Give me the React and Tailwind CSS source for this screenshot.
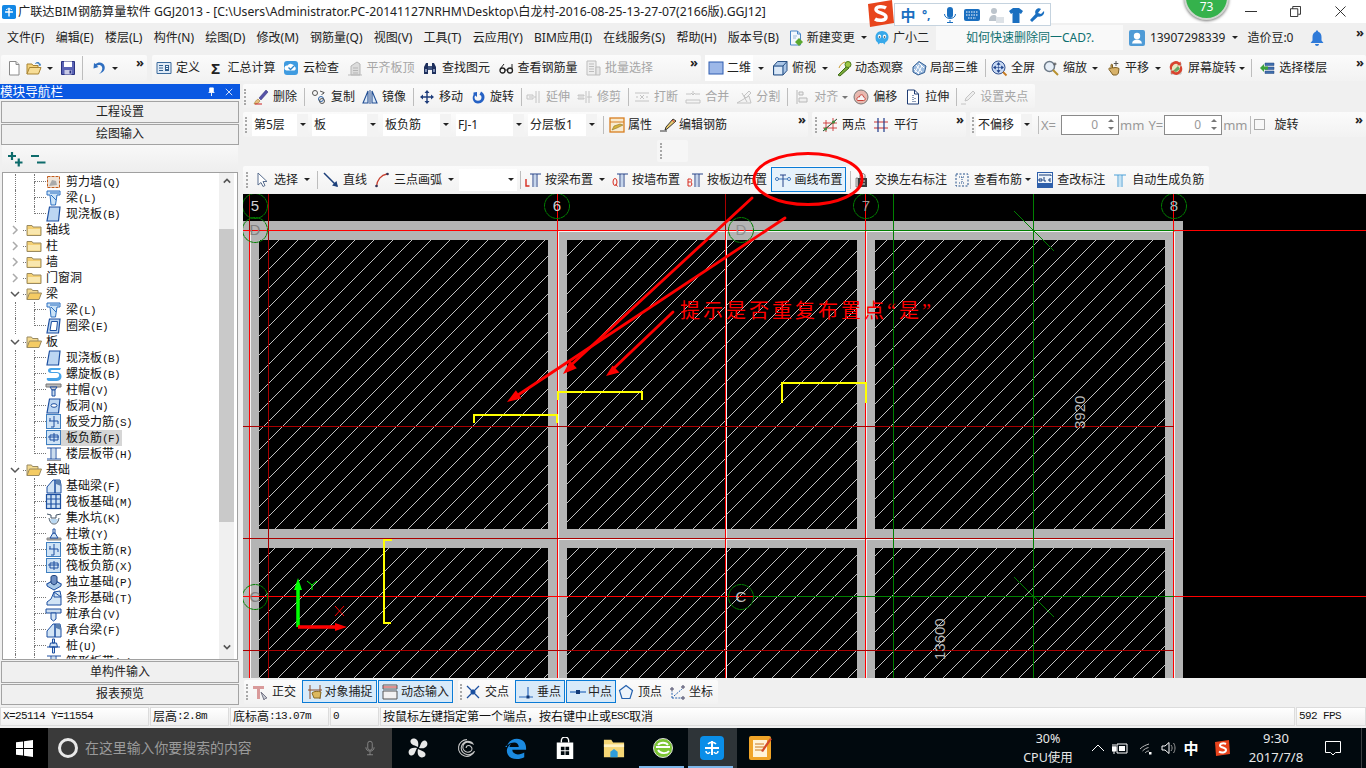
import React from "react";

const I = {
  new: <><path d="M3.5 1.5h6.5l3 3v10.5h-9.5z" fill="#fff" stroke="#8a8a8a"/><path d="M10 1.5v3h3" fill="#e4e4e4" stroke="#8a8a8a"/></>,
  open: <><path d="M1 14V4h5l1 1.500h5V8" fill="#f3d27c" stroke="#a98432"/><path d="M1 14l2.500-6.500H15L12.500 14z" fill="#f7dd96" stroke="#a98432"/><path d="M9 3.500c2-2 4-2 5 .5l1-.5-.5 2.500-2.300-.8.900-.5c-.8-1.300-2.300-1.500-3.600-.7" fill="#3f7fbf"/></>,
  save: <><path d="M1.500 1.500h13v13h-13z" fill="#5a63b5" stroke="#2b3280"/><path d="M4 1.500h8v5.500H4z" fill="#fff"/><path d="M4.500 10h7v4.500h-7z" fill="#c9cbe6"/><path d="M9.500 10.500h1.500v3H9.500z" fill="#2b3280"/></>,
  undo: <path d="M4 3l-.5 5.500L8.500 7 6.800 5.800C8.500 4.500 11 5 12 7c.8 2 0 4.500-3 7 4.500-1.500 6.500-4.500 5.500-8C13.500 2.500 9 1 5.500 4z" fill="#2f6fc0"/>,
  define: <><path d="M1 2.500h14v11H1z" fill="#dfeaf6" stroke="#3c6b9c"/><path d="M3 5h4v1H3zm0 2.500h4v1H3zm0 2.500h4v1H3zM9 5h4v6H9z" fill="#315f8f"/><path d="M10 6h2v1h-2zm0 2h2v1h-2z" fill="#fff"/></>,
  cloud: <><rect x="1" y="1" width="14" height="14" rx="3" fill="#3f9be0"/><path d="M3.500 10.500a2.500 2.500 0 0 1 1-5 4 4 0 0 1 7 1 2.200 2.200 0 0 1 0 4z" fill="#fff"/><path d="M5.500 7.500l2 2 3.500-3.500" fill="none" stroke="#2f86cc" strokeWidth="1.300"/></>,
  flat: <><path d="M4 15V6l6-4 3 2v11z" fill="#dcdcdc" stroke="#b5b5b5"/><path d="M6 8h5M6 10.500h5M6 13h5" stroke="#b5b5b5"/><path d="M1 15h14" stroke="#bbb"/></>,
  binoc: <><path d="M2 14V7l2-4h2v11zM14 14V7l-2-4h-2v11z" fill="#1e2f5c"/><path d="M6 6h4v4H6z" fill="#41547f"/><path d="M3 9h2v3H3zm8 0h2v3h-2z" fill="#7f8fb5"/></>,
  glass: <><circle cx="4.500" cy="10.500" r="2.500" fill="none" stroke="#222" strokeWidth="1.300"/><circle cx="12" cy="10.500" r="2.500" fill="none" stroke="#222" strokeWidth="1.300"/><path d="M7 10h2.500M2.500 8.500L6 4M14 8.500V4" stroke="#222" fill="none"/></>,
  batch: <><path d="M2 1h9v14H2z" fill="#eee" stroke="#bdbdbd"/><path d="M4 4h5M4 6.500h5M4 9h5M4 11.500h5M11 7h4v8h-4z" stroke="#bdbdbd" fill="#e6e6e6"/></>,
  sq: <rect x="1" y="2" width="14" height="12" fill="#9db8e8" stroke="#2f5db0"/>,
  box3d: <><path d="M1.500 6l4-4.500H15v9l-4 4.500H1.500z" fill="#a9c5e6" stroke="#274f82"/><path d="M1.500 6H11v9M11 6l4-4.500" fill="none" stroke="#274f82"/><path d="M2.500 7h7.500v7H2.500z" fill="#dbe8f6"/></>,
  orbit: <><path d="M2 15l9-9 2 2-9 8z" fill="#7aa83a" stroke="#3e6c16"/><circle cx="12" cy="4.500" r="3" fill="#9fc845" stroke="#4a7a1a"/><path d="M9 2c-3 1-5 3-6 6" stroke="#c79a2f" fill="none"/></>,
  cube: <><path d="M2 7l6-5.500L15 6l-1.500 6.500L7 15 2 12z" fill="#9fbde0" stroke="#2f5c92"/><path d="M5 5l6 7M8 3l5 5M3 9l5 5M8 5L4 12M11 6l-4 7" stroke="#fff" fill="none"/></>,
  full: <><circle cx="7.500" cy="7.500" r="6.500" fill="#c7d8f2" stroke="#2f4f8f"/><path d="M7.500 3v9M3 7.500h9M7.500 2.500l-1.500 2h3zM7.500 12.500l-1.500-2h3zM2.500 7.500l2-1.500v3zM12.500 7.500l-2-1.500v3z" stroke="#1c3f88" fill="#1c3f88" strokeWidth=".6"/><path d="M12 12l3.500 3.500" stroke="#c77a20" strokeWidth="1.800"/></>,
  zoom: <><circle cx="6.500" cy="6.500" r="5" fill="#e6eef7" stroke="#6d7a88" strokeWidth="1.500"/><path d="M10 10l5 5" stroke="#b8912f" strokeWidth="2"/><path d="M12 2.500v3M10.500 4h3" stroke="#555"/></>,
  pan: <><path d="M3 9.500c-.8-1.500 1-2 2-.7l0-3.800c0-1 1.500-1 1.500 0V8l2.500-.5c1.500 0 3 .3 4 1l-.7 5-2 1.500H7z" fill="#d8b26a" stroke="#7e6024"/><path d="M10 1v5M7.800 3.500h4.500" stroke="#555"/></>,
  screen: <><path d="M3 3h10v11H3z" fill="#e8e8c2" stroke="#bbb"/><path d="M5 11l5-5 2 3-4 3z" fill="#67a867"/><path d="M2.500 10a6 6 0 0 1 9-7.500l1-1 .5 4-4-.3 1-1A4.500 4.500 0 0 0 4 9.500zM13.500 6a6 6 0 0 1-9 7.500l-1 1-.5-4 4 .3-1 1A4.500 4.500 0 0 0 12 6.500z" fill="#d8432f"/></>,
  floors: <><path d="M6 3h9v2.500H6zM6 7h9v2.500H6zM6 11h9v2.500H6z" fill="#3f6fae" stroke="#24477c" strokeWidth=".5"/><path d="M1 8l4-4v2.500h4v3H5V12z" fill="#3ba33b"/></>,
  change: <><path d="M2.500 1h7l3 3v11h-10z" fill="#f3f8fd" stroke="#4a87c8"/><path d="M9.500 1v3h3" fill="none" stroke="#4a87c8"/><path d="M5 6h4M5 8h3" stroke="#9fbcd9"/><path d="M11 8l4 4-4 4-4-4z" fill="#5ba82f"/></>,
  xiao: <><path d="M8 1c4 0 6.500 2.800 6.500 6 0 2.800-1.500 4.500-3 5.300l-1 2.200-1.500-1.500c-1 .2-2 .2-3 0L4.500 14.500l-1-2.200C2 11.500 1.500 9.800 1.500 7 1.500 3.800 4 1 8 1z" fill="#38a9ea"/><ellipse cx="5.500" cy="6.500" rx="1.600" ry="2" fill="#fff"/><ellipse cx="10.500" cy="6.500" rx="1.600" ry="2" fill="#fff"/><circle cx="5.500" cy="7" r=".8" fill="#123"/><circle cx="10.500" cy="7" r=".8" fill="#123"/></>,
  user: <><rect x="0" y="0" width="16" height="16" rx="2" fill="#4f9bd6"/><circle cx="8" cy="6" r="3.200" fill="#fff"/><path d="M3 13.500c.5-3 2.500-4 5-4s4.500 1 5 4z" fill="#fff"/></>,
  bell: <path d="M8 .5c.8 0 1.200.5 1.200 1.300C11.500 2.500 12.500 4.500 12.500 7v3.500l2 2.500h-13l2-2.500V7c0-2.500 1-4.500 3.300-5.200C6.800 1 7.200.5 8 .5zM6 14h4c0 1.200-.9 2-2 2s-2-.8-2-2z" fill="#2f7ad8"/>,
  del: <><path d="M1 15c3 0 5-1 6-3L5 10c-2 1-3 3-4 5z" fill="#e4c080" stroke="#a47c30" strokeWidth=".6"/><path d="M6 9l7-8 2 2-7 8z" fill="#5552a8" stroke="#2c2a70" strokeWidth=".5"/><path d="M2 15h7" stroke="#c22" /></>,
  copy: <><circle cx="4" cy="4" r="2.500" fill="none" stroke="#555" strokeWidth="1"/><circle cx="10" cy="10" r="2.500" fill="none" stroke="#2f64a8"/><circle cx="11" cy="12" r="2.500" fill="none" stroke="#555"/><path d="M9 2l4 1.500-1 1.500M13 3.500l-2.500 2.500" stroke="#555" fill="none"/></>,
  mirror: <><path d="M1 14L6 2v12zM15 14L10 2v12z" fill="#dce9f7" stroke="#234f94" strokeWidth="1.100"/><path d="M8 1v14" stroke="#234f94"/></>,
  move: <path d="M8 1l2.500 3H8.700v3.300H12V5.500l3 2.500-3 2.500V8.700H8.700V12h1.800L8 15l-2.500-3h1.800V8.700H4v1.800L1 8l3-2.500v1.800h3.300V4H5.500z" fill="#1e3c7a"/>,
  rot: <path d="M3.500 3.500l0 2.500C1.500 9.500 3.500 14.500 8 14.500c4 0 6.500-3 6.500-6.500 0-2.500-1.500-4.500-3.500-5.500L9.500 5.800c1.500.5 2 1.500 2 2.700 0 2-1.500 3.300-3.500 3.300S4.500 10.500 4.500 8.500c0-.8.300-1.500.8-2L7 8V3z" fill="#2561c4"/>,
  ext: <path d="M1 6h6v4H1zM3 8h3M10 2v12M13 2v12M8 8h2" stroke="#c4c4c4" fill="#f4f4f4"/>,
  trim: <path d="M1 6h6v1H1zM1 9h6v1H1zM9 2v12M12 2v12M10 8h5" stroke="#c4c4c4" fill="none"/>,
  brk: <path d="M1 4h14M1 12h14M3 7v2M13 7v2M6 6l2 2-2 2M10 6L8 8l2 2" stroke="#c4c4c4" fill="none"/>,
  merge: <path d="M1 5h5M10 5h5M1 11h14v3H1zM8 2v4M6 4l2 2 2-2" stroke="#c4c4c4" fill="none"/>,
  split: <path d="M1 14h14L13 7 1 14zM6 4l5 9M13 2l2 2-5 5-2-2z" stroke="#c4c4c4" fill="#f3f3f3"/>,
  align: <path d="M3 1v14M5 3h4v3H5zM5 9h8v4H5z" stroke="#b8b8b8" fill="#eee"/>,
  offset: <><circle cx="8" cy="8" r="7" fill="#e8b9b0" stroke="#777"/><path d="M4.500 11.500c-1.500-1.500 0-4 2-3.500 0-3 4-3 4 0 2 0 2.500 3.500 0 3.500z" fill="#f6f6f6" stroke="#c9423a"/></>,
  stretch: <><path d="M2.500 1h7l4 4v10h-11z" fill="#fff" stroke="#1f3c74"/><path d="M9.500 1v4h4" fill="none" stroke="#1f3c74"/><path d="M8 6v8M10 9v1M10 12v1" stroke="#1f3c74" strokeDasharray="1 1"/></>,
  grip: <path d="M1 15h5M13 2l2 2-7 7-3 1 1-3z" stroke="#c4c4c4" fill="#eee"/>,
  prop: <><rect x="1" y="1" width="14" height="14" fill="#f8ebd0" stroke="#d87e20" strokeWidth="1.300"/><path d="M1 5h14" stroke="#d87e20"/><path d="M3 13l2-4 6-2 3 1-6 3z" fill="#d6b23c" stroke="#7c6418" strokeWidth=".5"/></>,
  pen: <><path d="M0 14h7M7 12l-2 1 1-3L13 2l3 2z" stroke="#222" fill="#e8c96c" strokeWidth=".9"/><path d="M12 3l2.500 2" stroke="#c33"/></>,
  two: <><path d="M1 14L15 2M4 3v12M11 1v13M1 6h14M1 11h14" stroke="#c33" strokeWidth=".9" fill="none" /><path d="M1 14L15 2" stroke="#264" /><circle cx="3.500" cy="12" r="1.600" fill="#3f8f3f"/><circle cx="11.500" cy="5" r="1.600" fill="#3f8f3f"/></>,
  cursor: <path d="M4 1v12l3-2.500 2 4 2-1-2-4h4z" fill="#fff" stroke="#5a6f8f"/>,
  line: <><path d="M1 1l13 13" stroke="#1c3f7a" strokeWidth="1.500"/><path d="M15 15l-6-1.500 4.500-4.500z" fill="#1c3f7a"/></>,
  arc: <><path d="M2.500 14.500C3 8 7 3 13 2" fill="none" stroke="#c8402f" strokeWidth="1.300"/><circle cx="2.500" cy="14" r="1.300" fill="#335"/><circle cx="13.500" cy="2" r="1.300" fill="#335"/></>,
  beamT: <><path d="M5 2h11M8 2v13M12 2v13" stroke="#26458a" fill="none"/><path d="M9 3h2v12H9z" fill="#c5d5ec"/><path d="M1 7v7h3.500" stroke="#d62d20" strokeWidth="1.400" fill="none"/></>,
  wallT: <><path d="M5 2h11M8 2v13M12 2v13" stroke="#26458a" fill="none"/><path d="M9 3h2v12H9z" fill="#c5d5ec"/><ellipse cx="3" cy="10" rx="2" ry="3.500" stroke="#d62d20" fill="none"/><path d="M3.500 12l2 2.500" stroke="#d62d20"/></>,
  edgeT: <><path d="M5 2h11M8 2v13M12 2v13" stroke="#26458a" fill="none"/><path d="M9 3h2v12H9z" fill="#c5d5ec"/><path d="M1 7h2.500c1.500 0 1.500 3 0 3 1.800 0 1.800 4 0 4H1zM1 10h2" stroke="#d62d20" fill="none"/></>,
  draw: <><path d="M1 7h14" stroke="#3a74b8"/><path d="M5 3h6M8 3v12" stroke="#26458a" fill="none"/><circle cx="2" cy="7" r="1.500" fill="#fff" stroke="#3a74b8"/><circle cx="14" cy="7" r="1.500" fill="#fff" stroke="#3a74b8"/></>,
  swap: <><path d="M5 6V3.500c0-2.500 5-2.500 5 0V6" fill="none" stroke="#666"/><path d="M3 6h9v9H3z" fill="#3c3c3c"/><path d="M5 9h5M5 12h5" stroke="#ddd"/><path d="M3 6H1v9h2z" fill="#ddd" stroke="#333" strokeWidth=".5"/></>,
  view: <><path d="M2 2h12v12H2z" fill="none" stroke="#24508a" strokeDasharray="2 1.500"/><path d="M5 5h6M8 5v6M5 11h6" stroke="#24508a" strokeDasharray="1 1"/></>,
  abc: <><rect x=".5" y=".5" width="15" height="15" fill="#eef4fb" stroke="#2e5faa"/><rect x=".5" y="11" width="15" height="4.500" fill="#2e5faa"/><path d="M2 3h12v1M2 7h3v2H2zM7 5v4h2M14 7h-2v2h2" stroke="#123a78" fill="none"/></>,
  auto: <><path d="M2 3h12M6 3v12M10 3v12" stroke="#4aa0d8" fill="none"/><path d="M7 4h2v11H7z" fill="#c5e3f5"/></>,
  ortho: <><path d="M1 2h11v3H8v10H5V5H1z" fill="#d99a9a"/><path d="M9 8l6 6-2 .5-1 1.500z" fill="#c8ccd4" stroke="#778"/></>,
  snap: <><path d="M3 1v14M13 1v14M1 6h14" stroke="#8a4a2a" fill="none"/><path d="M5 9c2-2 6-2 9-1l-1 6H7z" fill="#dcb85e" stroke="#8a6a22"/></>,
  dyn: <><path d="M1 1h14v4H1zM1 7h14v8H1z" fill="#f2f2f2" stroke="#555"/><path d="M1 3h14" stroke="#c33"/></>,
  cross: <path d="M2 2l12 12M14 2L2 14M6 8l2-2 2 2-2 2z" stroke="#1a4fa0" strokeWidth="1.300" fill="#1a4fa0"/>,
  perp: <><path d="M0 13h14M9 3v10" stroke="#2a68bb" strokeWidth="1.200"/><rect x="7.500" y="11.500" width="3" height="3" fill="#123a78"/></>,
  mid: <><path d="M0 8h16" stroke="#2a68bb" strokeWidth="1.200"/><rect x="6" y="6" width="4" height="4" fill="#123a78"/></>,
  vert: <><path d="M8 1.500l6.500 5-2.500 8H4l-2.500-8z" fill="#eef4fb" stroke="#2461ae" strokeWidth="1.200"/></>,
  coord: <><path d="M3 14V7M3 14h10M5 12l8-7" stroke="#2461ae" strokeDasharray="2 1.200" fill="none"/><circle cx="3" cy="5" r="1.200" fill="#fff" stroke="#335"/><circle cx="14" cy="3" r="1.200" fill="#fff" stroke="#335"/><circle cx="14" cy="14" r="1.200" fill="#fff" stroke="#335"/></>,
  plus: <><path d="M1 5h8M5 1v8M8 11.500h7.500M11.750 7.500v8" stroke="#0d6b6b" strokeWidth="2.200"/></>,
  minus: <><path d="M1 5h8M7 11.500h8.500" stroke="#0d6b6b" strokeWidth="2.200"/></>,
  folder: <><path d="M1 13.500V3.500h5l1 1.500h8v8.500z" fill="#f3cf73" stroke="#9a8a60"/><path d="M2 7h12v5.500H2z" fill="#f9e7ae"/></>,
  folderO: <><path d="M1 13.500V3h4.500l1 1.500H12V7" fill="#f3d98e" stroke="#9a8a60"/><path d="M1 13.500L3.500 7H15.500L13 13.500z" fill="#f4cb63" stroke="#9a8a60"/></>,
  wallI: <><rect x="1.500" y="2.500" width="12" height="11" fill="#efe4d8" stroke="#c05a1a" strokeDasharray="3 1"/><path d="M3 12l8-1-1-4-4-1z" fill="#aaa"/></>,
  beamI: <><path d="M1 1h13v4h-3l-1.500 10H5L4 5H1z" fill="#cbe3f7" stroke="#2c6fc0"/><path d="M5 5l5 5M4 3h9" stroke="#2c6fc0"/></>,
  slab: <path d="M3.500 1H14l-1.500 14H1z" fill="#bcd6f2" stroke="#1c4fa0" strokeWidth="1.200"/>,
  ring: <><path d="M3.500 1H14l-1.500 14H1z" fill="#bcd6f2" stroke="#1c4fa0" strokeWidth="1.200"/><path d="M5.500 3.500h6L10.500 12.500H4z" fill="#fff" stroke="#1c4fa0"/></>,
  spiral: <path d="M15 2H5C1 2 1 7 5 7h6c3 0 3 5-1 5H1c-1 2 1 3 2 3h8c6 0 6-9 0-9H6C4 6 4 4 6 4h8z" fill="#46a3e8"/>,
  cap: <><path d="M0 2h15v3H0z" fill="#bbb" stroke="#777"/><path d="M4 5h7L9 8H6z" fill="#d0d0d0" stroke="#1c4fa0"/><path d="M6 8h3v6H6z" fill="#cde" stroke="#1c4fa0"/></>,
  hole: <><path d="M3.500 1H14l-1.500 14H1z" fill="#bcd6f2" stroke="#1c4fa0" strokeWidth="1.200"/><ellipse cx="8" cy="7.500" rx="3" ry="1.800" fill="#fff" stroke="#1c4fa0"/></>,
  rebS: <><rect x=".5" y=".5" width="14" height="14" fill="#cfe3f6" stroke="#3f7fc0"/><path d="M8 2v11M3 7h9M4 4v3M12 7v3M8 13h-3" stroke="#1c4fa0" fill="none"/></>,
  rebF: <><rect x=".5" y=".5" width="14" height="14" fill="#cfe3f6" stroke="#3f7fc0"/><path d="M2 7h11M8 3v9M4 5h8v5H4z" stroke="#1c4fa0" fill="none"/></>,
  band: <><path d="M1 2h14M1 13h14M5 2v11M10 2v11" stroke="#1c4fa0" fill="none"/><path d="M6 3h3v9H6z" fill="#cde"/><path d="M1 14.500h14" stroke="#999"/></>,
  fbeam: <><path d="M1 15V9l6-7h2v13zM9 2l5 0 1 5v8H9z" fill="#d2e4f5" stroke="#1c4fa0"/><path d="M10 2l4 0 1 6-5-2z" fill="#5a7fae"/></>,
  raft: <><rect x=".5" y=".5" width="14" height="14" fill="#cfe3f6" stroke="#1c4fa0" strokeWidth="1.200"/><path d="M5 1v13M10 1v13M1 5h13M1 10h13" stroke="#1c4fa0" fill="none" strokeWidth="1.200"/></>,
  pit: <><path d="M1 4l4 1v3h5V5l5-1M3 8c1 5 3 6 5 6s4-1 5-6" stroke="#456" fill="none"/><path d="M4 9h8l-2 4H6z" fill="#b9d8f2"/></>,
  pier: <><path d="M1 12h14v2H1z" fill="#aaa" stroke="#888"/><path d="M4 12l3-5h2l3 5z" fill="#d0e2f5" stroke="#1c4fa0"/><path d="M7 3h2v4H7z" fill="#fff" stroke="#1c4fa0"/></>,
  iso: <><path d="M1 10l7-4 7 4-7 4z" fill="#d2e4f5" stroke="#1c4fa0" strokeWidth="1.100"/><path d="M1 10v2l7 4 7-4v-2" fill="#a9c9e8" stroke="#1c4fa0"/><path d="M5 9V3c0-2 6-2 6 0v6l-3 2z" fill="#6d8ec2" stroke="#1c3f7a"/></>,
  strip: <path d="M1 15v-3l4-3 3-7 6-1 1 5v9zM8 2l7 5-7 0z" fill="#d2e4f5" stroke="#1c4fa0"/>,
  pcap: <><path d="M0 3h15v4H0z" fill="#cde" stroke="#1c4fa0" /><path d="M5 7h5v6l-2.500 2L5 13z" fill="#d2e4f5" stroke="#1c4fa0"/></>,
  pile: <><path d="M6.500 1h2v4h-2zM4.500 5h6l1 4h-8zM6.500 9h2v6h-2z" fill="#d2e4f5" stroke="#1c4fa0"/><path d="M1 9h13" stroke="#1c4fa0"/></>,
};

function Ic({ n, cls = "" }) {
  return <svg viewBox="0 0 16 16" className={"w-4 h-4 shrink-0 overflow-visible " + cls}>{I[n]}</svg>;
}

const Caret = ({ cls = "" }) => (
  <span className={"block w-0 h-0 shrink-0 border-l-[3px] border-r-[3px] border-t-[3px] border-l-transparent border-r-transparent border-t-[#222] " + cls} />
);
const Sep = ({ cls = "" }) => <span className={"block w-px h-[18px] bg-[#bdbdbd] shrink-0 " + cls} />;
const Grip = ({ cls = "" }) => <span className={"block w-[2px] h-[16px] border-l-2 border-dotted border-[#a8a8a8] shrink-0 " + cls} />;
const More = ({ cls = "" }) => <span className={"self-start text-[13px] leading-[14px] font-bold text-[#222] shrink-0 " + cls}>»</span>;

function Tool({ i, t, g, cls = "", glyph }) {
  return (
    <div className={"flex items-center gap-[4px] shrink-0 " + cls}>
      {glyph ? <span className="w-4 text-center text-[15px] leading-4 font-bold text-[#222]">{glyph}</span> : <Ic n={i} />}
      <span className={"whitespace-nowrap leading-4 " + (g ? "text-[#a6a6a6]" : "text-[#222]")}>{t}</span>
    </div>
  );
}

function Combo({ t, cls = "" }) {
  return (
    <div className={"flex items-center h-[22px] bg-white shrink-0 " + cls}>
      <span className="flex-1 pl-[2px] whitespace-nowrap leading-4 text-[#222]">{t}</span>
      <span className="w-[11px] h-full bg-[#f3f3f3] flex items-center justify-center"><Caret /></span>
    </div>
  );
}

function Spin() {
  return (
    <div className="w-[58px] h-[20px] border border-[#8a8a8a] bg-white flex items-center justify-end shrink-0">
      <span className="text-[#999] leading-4 mr-[5px]">0</span>
      <span className="w-[15px] flex flex-col items-center gap-[5px]">
        <Caret cls="rotate-180 border-t-[#777]" />
        <Caret cls="border-t-[#777]" />
      </span>
    </div>
  );
}

const panel = "flex items-center rounded-[2px] bg-gradient-to-b from-[#fbfbfb] to-[#f2f2f2]";
const mono = "font-['Liberation_Mono',monospace] text-[11px] tracking-[-0.6px]";

function Node({ c, l, i, last, sel }) {
  return (
    <div className="flex h-4 items-stretch">
      <div className="w-[12px]" />
      <div className="w-[19px] border-l border-dotted border-[#777]" />
      <div className="w-[12px] flex flex-col">
        <div className="h-[8px] border-l border-b border-dotted border-[#777]" />
        <div className={"flex-1 " + (last ? "" : "border-l border-dotted border-[#777]")} />
      </div>
      <div className={"w-[15px] flex items-center justify-start " + (sel ? "bg-[#ececec]" : "")}><Ic n={i} /></div>
      <div className={"pl-[5px] pr-[2px] leading-4 whitespace-nowrap " + (sel ? "bg-[#d6d6d6]" : "")}>
        <span className="text-[12px] text-[#111]">{c}</span>
        <span className={mono + " text-[#111]"}>{l}</span>
      </div>
    </div>
  );
}

function Folder({ t, open }) {
  return (
    <div className="flex h-4 items-center">
      <div className="w-[20px] flex items-center justify-center">
        <svg viewBox="0 0 10 10" className="w-[10px] h-[10px] ml-[4px]">
          {open ? <path d="M1 3l4 4 4-4" fill="none" stroke="#555" strokeWidth="1.500" /> : <path d="M3 1l4 4-4 4" fill="none" stroke="#aaa" strokeWidth="1.500" />}
        </svg>
      </div>
      <div className="w-[3px] border-b border-dotted border-[#777]" />
      <Ic n={open ? "folderO" : "folder"} />
      <span className="pl-[4px] text-[12px] leading-4 text-[#111]">{t}</span>
    </div>
  );
}

const NavBtn = ({ t, cls = "" }) => (
  <div className={"mx-[1px] flex items-center justify-center bg-[#f0f0f0] border border-[#a3a3a3] text-[12px] text-[#222] leading-4 " + cls}>{t}</div>
);

const Cell = ({ children, cls = "" }) => (
  <div className={"h-full flex items-center border border-[#dcdcdc] bg-gradient-to-b from-white to-[#f0f0f0] overflow-hidden whitespace-nowrap text-[12px] text-[#111] pl-[2px] " + cls}>{children}</div>
);
const M = ({ children }) => <span className={mono}>{children}</span>;

const panels = [[259, 240, 289, 289], [567, 240, 290, 289], [875, 240, 290, 289], [259, 548, 289, 130], [567, 548, 290, 130], [875, 548, 290, 130]];
let hatchPath = "";
for (let c = 500; c < 1900; c += 19) hatchPath += `M${c - 194} 194L${c - 678} 678`;

function Canvas() {
  const red = "#ff0000", dark = "#a80000", green = "#008000", white = "#f2f2f2";
  const Circle = ({ x, y, t, c }) => (
    <g>
      <circle cx={x} cy={y} r="12.500" fill="none" stroke={green} strokeDasharray="5 .4" />
      <text x={x} y={y + 5} textAnchor="middle" fontSize="15" fontFamily="Liberation Sans" fill={c}>{t}</text>
    </g>
  );
  return (
    <svg viewBox="243 194 1123 484" className="w-[1123px] h-[484px] bg-black shrink-0">
      <defs>
        <clipPath id="panels">
          {panels.map(([x, y, w, h], k) => <rect key={k} x={x} y={y} width={w} height={h} />)}
        </clipPath>
      </defs>
      <g fill="#b4b4b4">
        <rect x="243" y="221" width="940" height="19" />
        <rect x="243" y="529" width="940" height="19" />
        <rect x="243" y="221" width="16" height="457" />
        <rect x="548" y="221" width="19" height="457" />
        <rect x="857" y="221" width="18" height="457" />
        <rect x="1165" y="221" width="18" height="457" />
      </g>
      <path d={hatchPath} clipPath="url(#panels)" stroke="#c0c0c0" strokeWidth="1" fill="none" shapeRendering="crispEdges" />
      <g shapeRendering="crispEdges" strokeWidth="1" fill="none">
        <path d="M250.500 232V678M558.500 232V678M726.500 232V678M866.500 232V678M1174.500 232V678M558 231.500H1174M558 539.500H1174" stroke={white} />
        <path d="M249.500 194V231M268.500 194V678" stroke={dark} />
        <path d="M249.500 231V678M557.500 194V678M725.500 231V678M865.500 194V678M1173.500 194V678" stroke={red} />
        <path d="M725.500 194V231" stroke={dark} />
        <path d="M243 426.500H1174M243 538.500H1174M243 650.500H1174" stroke={dark} />
        <path d="M243 230.500H753M243 596.500H753M1174 230.500H1366M1174 596.500H1366" stroke={red} />
        <path d="M753 230.500H1174M753 596.500H1174M893.500 194V678M1033.500 194V678" stroke={green} />
      </g>
      <path d="M1014 211L1054 251M1014 577L1054 617" stroke={green} strokeWidth="1" />
      <g fill="none" stroke="#ffff00" strokeWidth="2" shapeRendering="crispEdges">
        <path d="M474 423V415H557V423" />
        <path d="M558 400V392H642V400" />
        <path d="M782 403V383H866V403" />
        <path d="M392 540H384V623H391" />
      </g>
      <Circle x={255} y={206} t="5" c="#d0d0d0" />
      <Circle x={557} y={206} t="6" c="#d0d0d0" />
      <Circle x={866} y={206} t="7" c="#9a9a9a" />
      <Circle x={1174} y={206} t="8" c="#a8c0c0" />
      <Circle x={255} y={230} t="D" c="#808080" />
      <Circle x={741} y={230} t="D" c="#909090" />
      <Circle x={255} y={597} t="C" c="#808080" />
      <Circle x={741} y={597} t="C" c="#c0c0c0" />
      <g fontFamily="Liberation Sans" fontSize="15" fill="#b8b8b8">
        <text transform="translate(1085 429) rotate(-90)">3920</text>
        <text transform="translate(945 660) rotate(-90)" fontSize="15">13600</text>
      </g>
      <path d="M298 627V586" stroke="#00ff00" strokeWidth="3.500" />
      <path d="M298 578l-4 12h8z" fill="#00ff00" />
      <path d="M298 627H337" stroke={red} strokeWidth="3.500" />
      <path d="M347 627l-12-4v8z" fill={red} />
      <path d="M307 581l5 4 5-4M312 585v5" stroke="#00ff00" fill="none" />
      <path d="M335 606l9 10M344 606l-9 10" stroke={red} fill="none" />
    </svg>
  );
}

function Overlay() {
  return (
    <svg viewBox="0 0 1366 768" className="absolute left-0 top-0 w-[1366px] h-[768px] pointer-events-none">
      <ellipse cx="808" cy="179" rx="54" ry="25.500" fill="none" stroke="#ff0000" strokeWidth="3" />
      <g stroke="#ff0000" strokeWidth="2.800" fill="none" strokeLinecap="round">
        <path d="M752 198L570 366" />
        <path d="M785 218L515 397" />
        <path d="M673 312L612 370" />
      </g>
      <g fill="#ff0000">
        <path d="M563 374L570 360.800L576.800 368.200z" />
        <path d="M507 402L515.900 390.200L521.400 398.500z" />
        <path d="M606 376L612.600 365.400L619.500 372.600z" />
      </g>
      <text x="680" y="318" fontSize="20" letterSpacing="3" fill="#ff0000" fontFamily="Noto Sans CJK SC, sans-serif">提示是否重复布置点<tspan fontFamily="Liberation Serif">“</tspan>是<tspan fontFamily="Liberation Serif">”</tspan></text>
    </svg>
  );
}

export default function App() {
  return (
    <div className="relative w-[1366px] h-[768px] overflow-hidden flex flex-col bg-[#f0f0f0] text-[12px] text-[#222] font-['Noto_Sans','Noto_Sans_CJK_SC',sans-serif]">
      {/* title bar */}
      <div className="h-[23px] bg-white flex items-center shrink-0">
        <svg viewBox="0 0 16 16" className="w-[14px] h-[14px] ml-[2px] shrink-0">
          <rect width="16" height="16" rx="2" fill="#1388e6" />
          <path d="M8 3v10M3.500 8h9" stroke="#fff" strokeWidth="1.600" fill="none" />
          <path d="M4.500 5.500c1.500-1.500 5.500-1.500 7 0" stroke="#fff" fill="none" />
        </svg>
        <span className="ml-[2px] text-[12.200px] leading-[18px] text-[#222] whitespace-nowrap">广联达BIM钢筋算量软件 GGJ2013 - [C:\Users\Administrator.PC-20141127NRHM\Desktop\白龙村-2016-08-25-13-27-07(2166版).GGJ12]</span>
        <div className="ml-auto flex items-center">
          <span className="block w-[12px] h-px bg-[#333] mr-[33px]" />
          <svg viewBox="0 0 12 12" className="w-[11px] h-[11px] mr-[34px]"><path d="M.5 3h8v8.500h-8zM3 3V.5h8.500V9H9" fill="none" stroke="#222" /></svg>
          <svg viewBox="0 0 12 12" className="w-[11px] h-[11px] mr-[20px]"><path d="M.5.500l11 11M11.500.500l-11 11" stroke="#222" /></svg>
        </div>
      </div>
      {/* menu bar */}
      <div className="h-[27px] flex items-center shrink-0 pl-[7px] pt-[2px]">
        <div className="flex items-center gap-[11.300px] whitespace-nowrap text-[#222] leading-4">
          {["文件(F)", "编辑(E)", "楼层(L)", "构件(N)", "绘图(D)", "修改(M)", "钢筋量(Q)", "视图(V)", "工具(T)", "云应用(Y)", "BIM应用(I)", "在线服务(S)", "帮助(H)", "版本号(B)"].map((t) => <span key={t}>{t}</span>)}
        </div>
        <Ic n="change" cls="ml-[9px]" />
        <span className="ml-[3px] whitespace-nowrap leading-4">新建变更</span>
        <Caret cls="ml-[6px]" />
        <Ic n="xiao" cls="ml-[7px]" />
        <span className="ml-[3px] whitespace-nowrap leading-4">广小二</span>
        <div className="ml-[7px] w-[187px] h-[25px] bg-[#f9f9f9] flex items-center pl-[30px] text-[#0d6f6f] whitespace-nowrap leading-4">如何快速删除同一CAD?.</div>
        <Ic n="user" cls="ml-[6px]" />
        <span className="ml-[5px] whitespace-nowrap leading-4">13907298339</span>
        <Caret cls="ml-[7px]" />
        <span className="ml-[9px] whitespace-nowrap leading-4">造价豆:0</span>
        <Ic n="bell" cls="ml-[15px]" />
        <More cls="ml-auto mr-[2px]" />
      </div>
      {/* toolbar row 1 */}
      <div className="h-[34px] flex items-center shrink-0 pl-[1px] pt-[5px] pb-[3px]">
        <div className={panel + " w-[146px] h-full pl-[5px]"}>
          <Ic n="new" />
          <Ic n="open" cls="ml-[4px]" />
          <Caret cls="ml-[5px]" />
          <Ic n="save" cls="ml-[7px]" />
          <Sep cls="ml-[6px] h-[24px]" />
          <Ic n="undo" cls="ml-[7px]" />
          <Caret cls="ml-[6px]" />
          <More cls="ml-auto mr-[3px]" />
        </div>
        <div className={panel + " w-[549px] h-full ml-[5px] pl-[4px] gap-[7.500px]"}>
          <Tool i="define" t="定义" />
          <Tool glyph="Σ" t="汇总计算" />
          <Tool i="cloud" t="云检查" />
          <Tool i="flat" t="平齐板顶" g />
          <Tool i="binoc" t="查找图元" />
          <Tool i="glass" t="查看钢筋量" />
          <Tool i="batch" t="批量选择" g />
          <More cls="ml-auto mr-[3px]" />
        </div>
        <div className={panel + " flex-1 h-full ml-[4px]"}>
          <div className="flex items-center h-full bg-white pl-[3px] pr-[2px]"><Tool i="sq" t="二维" cls="!gap-[3px]" /></div>
          <Caret cls="ml-[5px]" />
          <Tool i="box3d" t="俯视" cls="ml-[8px]" />
          <Caret cls="ml-[6px]" />
          <Tool i="orbit" t="动态观察" cls="ml-[8px] !gap-[3px]" />
          <Tool i="cube" t="局部三维" cls="ml-[8px] !gap-[3px]" />
          <Sep cls="ml-[7px]" />
          <Tool i="full" t="全屏" cls="ml-[5px]" />
          <Tool i="zoom" t="缩放" cls="ml-[8px]" />
          <Caret cls="ml-[5px]" />
          <Tool i="pan" t="平移" cls="ml-[8px] !gap-[3px]" />
          <Caret cls="ml-[6px]" />
          <Tool i="screen" t="屏幕旋转" cls="ml-[7px]" />
          <Caret cls="ml-[3px]" />
          <Sep cls="ml-[6px]" />
          <Tool i="floors" t="选择楼层" cls="ml-[7px]" />
          <More cls="ml-auto mr-[2px]" />
        </div>
      </div>
      {/* main */}
      <div className="h-[621px] flex shrink-0">
        {/* left nav */}
        <div className="w-[240px] flex flex-col shrink-0">
          <div className="h-[15px] bg-[#0a58e2] flex items-center shrink-0 overflow-hidden">
            <span className="text-[12.600px] leading-[15px] text-white whitespace-nowrap">模块导航栏</span>
            <svg viewBox="0 0 10 10" className="w-[9px] h-[9px] ml-auto mr-[9px]"><path d="M3 1h4v4l1 1H2l1-1zM5 6v4" fill="#fff" stroke="#fff" /></svg>
            <svg viewBox="0 0 10 10" className="w-[8px] h-[8px] mr-[7px]"><path d="M1 1l8 8M9 1l-8 8" stroke="#fff" /></svg>
          </div>
          <NavBtn t="工程设置" cls="h-[22px] mt-[2px]" />
          <NavBtn t="绘图输入" cls="h-[22px] mt-px" />
          <div className="h-[27px] mx-[2px] bg-gradient-to-b from-[#f8f8f8] to-[#eeeeee] flex items-center pl-[5px] gap-[7px] shrink-0">
            <Ic n="plus" />
            <Ic n="minus" />
          </div>
          <div className="mx-[2px] h-[488px] border border-[#a0a0a0] bg-white flex overflow-hidden shrink-0">
            <div className="w-[216px] pt-[1px] overflow-hidden h-full">
              <Node c="剪力墙" l="(Q)" i="wallI" />
              <Node c="梁" l="(L)" i="beamI" />
              <Node c="现浇板" l="(B)" i="slab" last />
              <Folder t="轴线" />
              <Folder t="柱" />
              <Folder t="墙" />
              <Folder t="门窗洞" />
              <Folder t="梁" open />
              <Node c="梁" l="(L)" i="beamI" />
              <Node c="圈梁" l="(E)" i="ring" last />
              <Folder t="板" open />
              <Node c="现浇板" l="(B)" i="slab" />
              <Node c="螺旋板" l="(B)" i="spiral" />
              <Node c="柱帽" l="(V)" i="cap" />
              <Node c="板洞" l="(N)" i="hole" />
              <Node c="板受力筋" l="(S)" i="rebS" />
              <Node c="板负筋" l="(F)" i="rebF" sel />
              <Node c="楼层板带" l="(H)" i="band" last />
              <Folder t="基础" open />
              <Node c="基础梁" l="(F)" i="fbeam" />
              <Node c="筏板基础" l="(M)" i="raft" />
              <Node c="集水坑" l="(K)" i="pit" />
              <Node c="柱墩" l="(Y)" i="pier" />
              <Node c="筏板主筋" l="(R)" i="rebS" />
              <Node c="筏板负筋" l="(X)" i="rebF" />
              <Node c="独立基础" l="(P)" i="iso" />
              <Node c="条形基础" l="(T)" i="strip" />
              <Node c="桩承台" l="(V)" i="pcap" />
              <Node c="承台梁" l="(F)" i="fbeam" />
              <Node c="桩" l="(U)" i="pile" />
              <Node c="筏形板带" l="(H)" i="band" />
            </div>
            <div className="w-[15px] h-full bg-[#f0f0f0] flex flex-col shrink-0">
              <div className="h-[16px] flex items-center justify-center shrink-0">
                <svg viewBox="0 0 10 10" className="w-[8px] h-[8px]"><path d="M1 7l4-4 4 4" fill="none" stroke="#555" strokeWidth="2" /></svg>
              </div>
              <div className="h-[40px] shrink-0" />
              <div className="h-[293px] bg-[#c9c9c9] shrink-0" />
              <div className="flex-1" />
              <div className="h-[16px] mb-[4px] flex items-center justify-center shrink-0">
                <svg viewBox="0 0 10 10" className="w-[8px] h-[8px]"><path d="M1 3l4 4 4-4" fill="none" stroke="#555" strokeWidth="2" /></svg>
              </div>
            </div>
          </div>
          <NavBtn t="单构件输入" cls="h-[22px] mt-px" />
          <NavBtn t="报表预览" cls="h-[22px] mt-px" />
        </div>
        {/* right work area */}
        <div className="flex-1 flex flex-col pl-[3px] min-w-0">
          <div className={panel + " w-[792px] h-[24px] shrink-0 pl-[1px] pt-[2px] gap-[7px]"}>
            <Grip />
            <Tool i="del" t="删除" />
            <Sep cls="-mr-px" />
            <Tool i="copy" t="复制" />
            <Tool i="mirror" t="镜像" />
            <Sep cls="-mr-[2px]" />
            <Tool i="move" t="移动" />
            <Tool i="rot" t="旋转" />
            <Sep cls="-mr-[3px]" />
            <Tool i="ext" t="延伸" g />
            <Tool i="trim" t="修剪" g />
            <Sep cls="-mr-[2px]" />
            <Tool i="brk" t="打断" g />
            <Tool i="merge" t="合并" g />
            <Tool i="split" t="分割" g />
            <Sep cls="-mr-px" />
            <Tool i="align" t="对齐" g />
            <Caret cls="-ml-[3px] border-t-[#777]" />
            <Tool i="offset" t="偏移" cls="-ml-[2px]" />
            <Tool i="stretch" t="拉伸" cls="ml-[1px]" />
            <Sep cls="-mr-[4px]" />
            <Tool i="grip" t="设置夹点" g />
          </div>
          <div className="h-[25px] mt-[4px] flex shrink-0">
            <div className={panel + " w-[565px] h-full pl-[2px]"}>
              <Grip />
              <Combo t="第5层" cls="ml-[5px] w-[56px]" />
              <Combo t="板" cls="ml-[4px] w-[66px]" />
              <Combo t="板负筋" cls="ml-[5px] w-[68px]" />
              <Combo t="FJ-1" cls="ml-[5px] w-[68px]" />
              <Combo t="分层板1" cls="ml-[4px] w-[69px]" />
              <Sep cls="ml-[6px]" />
              <Tool i="prop" t="属性" cls="ml-[5px] !gap-[3px]" />
              <Tool i="pen" t="编辑钢筋" cls="ml-[8px] !gap-[3px]" />
              <More cls="ml-auto mr-[2px]" />
            </div>
            <div className={panel + " w-[154px] h-full ml-[4px] pl-[3px]"}>
              <Grip />
              <Tool i="two" t="两点" cls="ml-[5px]" />
              <div className="flex items-center gap-[5px] ml-[7px]">
                <svg viewBox="0 0 16 16" className="w-4 h-4"><path d="M1 5h14M1 11h14" stroke="#c33" strokeWidth="1.200" /><path d="M5 1v14M11 1v14" stroke="#1e3a8a" strokeWidth="1.200" /></svg>
                <span className="leading-4">平行</span>
              </div>
              <More cls="ml-auto mr-[2px]" />
            </div>
            <div className={panel + " flex-1 h-full ml-[4px] pl-[2px]"}>
              <Grip />
              <Combo t="不偏移" cls="ml-[2px] w-[56px]" />
              <Sep cls="ml-[6px]" />
              <span className="ml-[2px] text-[#999] text-[13px] leading-4">X=</span>
              <div className="ml-[5px]"><Spin /></div>
              <span className="ml-[1px] text-[#999] text-[13px] leading-4">mm</span>
              <span className="ml-[4px] text-[#999] text-[13px] leading-4">Y=</span>
              <div className="ml-[1px]"><Spin /></div>
              <span className="ml-[1px] text-[#999] text-[13px] leading-4">mm</span>
              <Sep cls="ml-[3px]" />
              <span className="ml-[3px] block w-[11px] h-[11px] border border-[#aaa] bg-[#f7f7f7] shrink-0" />
              <span className="ml-[9px] leading-4 whitespace-nowrap">旋转</span>
              <More cls="ml-auto mr-[3px]" />
            </div>
          </div>
          <div className="h-[29px] pt-[3px] shrink-0 flex">
            <div className="ml-[414px] w-[31px] h-[22px] rounded-[2px] bg-[#f6f6f6] flex items-center justify-start pl-[3px]"><Grip /></div>
          </div>
          <div className={panel + " w-[966px] h-[27px] shrink-0 pl-[3px]"}>
            <Grip />
            <Tool i="cursor" t="选择" cls="ml-[6px]" />
            <Caret cls="ml-[6px]" />
            <Sep cls="ml-[7px]" />
            <Tool i="line" t="直线" cls="ml-[5px]" />
            <Tool i="arc" t="三点画弧" cls="ml-[7px]" />
            <Caret cls="ml-[6px]" />
            <div className="ml-[5px] w-[58px] h-[22px] bg-white flex items-center justify-end pr-[3px] shrink-0"><Caret /></div>
            <Sep cls="ml-[3px]" />
            <Tool i="beamT" t="按梁布置" cls="ml-[4px]" />
            <Caret cls="ml-[6px]" />
            <Tool i="wallT" t="按墙布置" cls="ml-[7px]" />
            <Tool i="edgeT" t="按板边布置" cls="ml-[7px]" />
            <div className="ml-[4px] h-[25px] w-[75px] border border-[#0a7bd6] bg-[#e6f2fb] flex items-center justify-center shrink-0"><Tool i="draw" t="画线布置" /></div>
            <Sep cls="ml-[4px]" />
            <Tool i="swap" t="交换左右标注" cls="ml-[4px]" />
            <Tool i="view" t="查看布筋" cls="ml-[7px]" />
            <Caret cls="ml-[3px]" />
            <Tool i="abc" t="查改标注" cls="ml-[6px]" />
            <Tool i="auto" t="自动生成负筋" cls="ml-[7px]" />
          </div>
          <div className="h-px shrink-0" />
          <Canvas />
          <div className="h-[27px] flex items-center py-[1px] shrink-0">
            <div className={panel + " w-[210px] h-[24px] ml-px pl-[2px]"}>
              <Grip />
              <Tool i="ortho" t="正交" cls="ml-[4px]" />
              <div className="ml-[6px] w-[75px] h-[23px] border border-[#0a7bd6] bg-[#d8eaf9] flex items-center justify-center shrink-0"><Tool i="snap" t="对象捕捉" cls="!gap-[2px]" /></div>
              <div className="ml-px w-[75px] h-[23px] border border-[#0a7bd6] bg-[#d8eaf9] flex items-center justify-center shrink-0"><Tool i="dyn" t="动态输入" cls="!gap-[3px]" /></div>
            </div>
            <div className={panel + " w-[260px] h-[24px] ml-[4px] pl-[2px]"}>
              <Grip />
              <Tool i="cross" t="交点" cls="ml-[3px]" />
              <div className="ml-[6px] w-[50px] h-[23px] border border-[#0a7bd6] bg-[#d8eaf9] flex items-center justify-center shrink-0"><Tool i="perp" t="垂点" cls="!gap-[2px]" /></div>
              <div className="ml-px w-[50px] h-[23px] border border-[#0a7bd6] bg-[#d8eaf9] flex items-center justify-center shrink-0"><Tool i="mid" t="中点" cls="!gap-[2px]" /></div>
              <Tool i="vert" t="顶点" cls="ml-[2px]" />
              <Tool i="coord" t="坐标" cls="ml-[7px]" />
            </div>
          </div>
        </div>
      </div>
      {/* status bar */}
      <div className="h-[23px] py-[2px] flex gap-[1px] shrink-0">
        <Cell cls="w-[149px]"><M>X=25114 Y=11554</M></Cell>
        <Cell cls="w-[79px]">层高<M>:2.8m</M></Cell>
        <Cell cls="w-[99px]">底标高<M>:13.07m</M></Cell>
        <Cell cls="w-[49px]"><M>0</M></Cell>
        <Cell cls="flex-1">按鼠标左键指定第一个端点，按右键中止或<M>ESC</M>取消</Cell>
        <Cell cls="w-[70px]"><M>592 FPS</M></Cell>
      </div>
      {/* taskbar */}
      <div className="flex-1 flex bg-[#01090e] text-white items-stretch min-h-0">
        <div className="w-[48px] bg-black flex items-center justify-center shrink-0">
          <svg viewBox="0 0 18 18" className="w-[17px] h-[17px]"><path d="M0 2.500l7.500-1V8.500H0zM8.500 1.300L18 0V8.500H8.500zM0 9.500h7.500v7L0 15.500zM8.500 9.500H18V18l-9.500-1.300z" fill="#fff" /></svg>
        </div>
        <div className="w-[344px] bg-[#3a3a3a] flex items-center pl-[10px] shrink-0">
          <span className="block w-[20px] h-[20px] rounded-full border-[3px] border-[#e8e8e8]" />
          <span className="ml-[7px] text-[13.900px] leading-5 text-[#9a9a9a] whitespace-nowrap">在这里输入你要搜索的内容</span>
          <svg viewBox="0 0 16 20" className="w-[12px] h-[18px] ml-auto mr-[16px]"><rect x="5" y="1" width="6" height="12" rx="3" fill="none" stroke="#999" /><path d="M2.500 9c0 7 11 7 11 0M8 15v4M4 19h8" fill="none" stroke="#999" /></svg>
        </div>
        <div className="flex ml-[1.500px] items-stretch">
          <Slot><svg viewBox="0 0 24 24" className="w-[22px] h-[22px]"><path d="M12 11C9 9 5 9 4 6s2-5 5-4 4 5 3 9zM13 12c2-3 2-7 5-8s5 2 4 5-5 4-9 3zM12 13c3 2 7 2 8 5s-2 5-5 4-4-5-3-9zM11 12c-2 3-2 7-5 8s-5-2-4-5 5-4 9-3z" fill="#e8e8e8" /></svg></Slot>
          <Slot><svg viewBox="0 0 24 24" className="w-[20px] h-[20px]"><path d="M12 2a10 10 0 1 0 9 14c-2 3-5 4-8 4a8 8 0 0 1 0-16c3 0 5 1 6 3-2-1-4-2-6-2a6 6 0 0 0 0 12c3 0 5-2 5-4s-2-4-4-4-3 1-3 3" fill="none" stroke="#c8c8c8" strokeWidth="1.300" /></svg></Slot>
          <Slot><svg viewBox="0 0 24 24" className="w-[22px] h-[22px]"><path d="M2 11C3 5 8 2 13 2c6 0 10 4 10 10v2H8c0 3 3 5 6 5 3 0 5-1 7-2v5c-2 1-5 2-8 2-7 0-11-4-11-9 0-3 2-6 5-8-2 2-2 3-2 4h10c0-3-2-5-5-5-4 0-7 2-10 5z" fill="#1b8ae0" /></svg></Slot>
          <Slot><svg viewBox="0 0 24 24" className="w-[22px] h-[22px]"><path d="M8 6V4a4 4 0 0 1 8 0v2" fill="none" stroke="#fff" strokeWidth="1.500" /><path d="M3 6h18v18H3z" fill="#fff" /><path d="M7.500 10.500h4v4h-4zM12.500 10.500h4v4h-4zM7.500 15.500h4v4h-4zM12.500 15.500h4v4h-4z" fill="#01090e" /></svg></Slot>
          <Slot><svg viewBox="0 0 24 24" className="w-[22px] h-[22px]"><path d="M1 3h8l2 3h12v16H1z" fill="#f6d776" /><path d="M1 8h22v3H1z" fill="#fff3c4" /><path d="M8 22v-6l4-3 4 3v6z" fill="#2e9ddc" /></svg></Slot>
          <Slot u><svg viewBox="0 0 24 24" className="w-[24px] h-[24px]"><circle cx="12" cy="12" r="9.500" fill="#7cc434" stroke="#dcdcdc" /><path d="M5 11h14M7 14c2 4 9 4 11 1M7 9c2-3 8-3 10 0" stroke="#fff" strokeWidth="1.800" fill="none" /></svg></Slot>
          <Slot u active><svg viewBox="0 0 24 24" className="w-[24px] h-[24px]"><rect width="24" height="24" rx="4" fill="#0a8ee8" /><path d="M12 5v14M5 12h14" stroke="#fff" strokeWidth="2" /><path d="M8 8c2-2.500 6-2.500 8 0M6 15c0 3 3 3 4 1M18 15c0 3-3 3-4 1" stroke="#fff" strokeWidth="1.500" fill="none" /></svg></Slot>
          <Slot><svg viewBox="0 0 24 24" className="w-[24px] h-[24px]"><rect width="22" height="24" rx="2" fill="#f0a428" /><rect x="4" y="4" width="14" height="17" fill="#fff3d8" /><path d="M6 8h9M6 11h9M6 14h7" stroke="#c87a20" /><path d="M12 15l9-13 2 1-9 13z" fill="#d44a2a" /></svg></Slot>
        </div>
        <div className="ml-auto flex items-center shrink-0">
          <div className="w-[60px] flex flex-col items-center text-[12.500px] text-[#e8e8e8] leading-[19px]"><span>30%</span><span>CPU使用</span></div>
          <svg viewBox="0 0 16 16" className="ml-[12px] w-4 h-4"><path d="M2 11l6-6 6 6" fill="none" stroke="#fff" /></svg>
          <svg viewBox="0 0 16 16" className="ml-[6px] w-4 h-4"><path d="M5 4h10v9H5z" fill="none" stroke="#fff" /><path d="M7 6h6v5H7z" fill="#fff" /><path d="M0 7h4v4H0zM1 4v3M3 4v3M2 11v3" stroke="#fff" fill="#fff" /></svg>
          <svg viewBox="0 0 16 16" className="ml-[11px] w-4 h-4"><path d="M1 9c3-3 6-4 9-5M3.500 11c2-2 4-3 6-3.500M6 13c1-1 2-2 4-2" fill="none" stroke="#bbb" /><rect x="10" y="12" width="2.500" height="2.500" fill="#fff" /></svg>
          <svg viewBox="0 0 16 16" className="ml-[6px] w-4 h-4"><path d="M1 6h3l4-3.500v11L4 10H1z" fill="none" stroke="#fff" /><path d="M10 5c1.500 2 1.500 4 0 6M12.500 3c2 3 2 7 0 10" fill="none" stroke="#999" /></svg>
          <span className="ml-[6px] w-4 text-[15px] leading-4 font-bold text-center text-white">中</span>
          <svg viewBox="0 0 18 18" className="ml-[14px] w-[18px] h-[18px]"><path d="M2 3l14-2 1 14-14 2z" fill="#e8431c" /><path d="M13 5c-2-1-6-1-6 1.500S13 8 13 11s-5 3-7 1.500" stroke="#fff" strokeWidth="2" fill="none" /></svg>
          <div className="ml-[15px] w-[60px] flex flex-col items-center text-[13px] text-[#e8e8e8] leading-[19px]"><span>9:30</span><span className="whitespace-nowrap">2017/7/8</span></div>
          <svg viewBox="0 0 16 16" className="ml-[19px] w-4 h-4"><path d="M.5 1.500h15v11h-5L8 15l-2.500-2.500h-5z" fill="none" stroke="#fff" /></svg>
          <div className="ml-[20px] w-[5px] h-full border-l border-[#3a3f42]" />
        </div>
      </div>
      {/* overlays */}
      <div className="absolute left-[1184px] -top-[25px] w-[45px] h-[45px] rounded-full bg-[#35b24c] border-2 border-[#cfd6cf] shadow-[0_1px_3px_#777] flex items-end justify-center pb-[5px] text-white text-[12px] leading-3">73</div>
      <div className="absolute left-[894px] top-[3px] w-[157px] h-[23px] bg-white border border-[#c5d3df] flex items-center text-[#1a6fc0]">
        <span className="ml-[5px] w-4 text-[15px] leading-4 font-bold text-center">中</span>
        <span className="ml-[6px] w-4 text-[12px] leading-3 font-bold">°,</span>
        <svg viewBox="0 0 16 16" className="ml-[4px] w-4 h-4"><rect x="5" y="0" width="6" height="11" rx="3" fill="#1a6fc0" /><path d="M2.500 7c0 6 11 6 11 0M8 13v3M5 15.500h6" stroke="#1a6fc0" fill="none" /></svg>
        <svg viewBox="0 0 16 16" className="ml-[6px] w-4 h-4"><rect x="0" y="2" width="16" height="12" rx="2" fill="#1a6fc0" /><path d="M2 5h12M2 8h12M4 11h8" stroke="#fff" strokeDasharray="1.500 1" /></svg>
        <svg viewBox="0 0 16 16" className="ml-[8px] w-4 h-4"><circle cx="6" cy="4" r="3" fill="#bcc4cc" /><path d="M1 14c0-5 3-6 5-6s3 1 3 6z" fill="#bcc4cc" /><rect x="8" y="10" width="8" height="6" fill="#dde2e7" /></svg>
        <svg viewBox="0 0 16 16" className="ml-[4px] w-4 h-4"><path d="M5 1h6l4 3-2 3-1.500-1v10h-7V6L3 7 1 4z" fill="#1a6fc0" /></svg>
        <svg viewBox="0 0 16 16" className="ml-[5px] w-4 h-4"><path d="M15 4l-3 3-3-1 3-4c-3-2-7 1-5.500 5L1 13l2 2 6-5.500c3 1 7-2 6-5.500z" fill="#1a6fc0" /></svg>
      </div>
      <svg viewBox="0 0 28 28" className="absolute left-[866px] top-0 w-[28px] h-[28px]"><path d="M2 4l24-4 2 23-24 4z" fill="#e8451c" /><path d="M20 8c-3-2-10-2-10 1.500S20 13 20 17s-8 4-11 2" stroke="#fff" strokeWidth="3.500" fill="none" /></svg>
      <Overlay />
    </div>
  );
}

function Slot({ children, u, active }) {
  return (
    <div className={"w-[49px] flex flex-col items-center justify-center relative " + (active ? "bg-[#2e3438]" : "")}>
      {children}
      {u && <span className="absolute left-0 right-[4px] bottom-0 h-[2px] bg-[#7db6ea]" />}
    </div>
  );
}
